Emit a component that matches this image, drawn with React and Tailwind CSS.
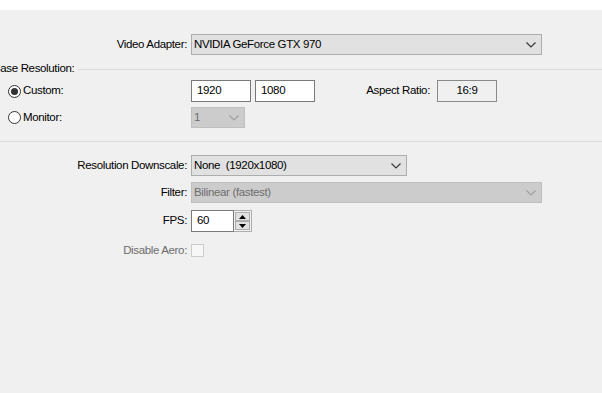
import React from "react";

const font = {
  fontFamily: '"Liberation Sans", Arial, sans-serif',
  letterSpacing: "-0.35px",
};

function Chevron({ disabled }) {
  return (
    <svg width="10" height="6" viewBox="0 0 10 6" className="shrink-0">
      <polyline
        points="0.5,0.5 5,5 9.5,0.5"
        fill="none"
        stroke={disabled ? "#a0a0a0" : "#333333"}
        strokeWidth="1.1"
      />
    </svg>
  );
}

function Combo({ width, value, disabled }) {
  return (
    <div
      className={
        "flex h-[21px] items-center justify-between border pl-[2px] pr-[5px] " +
        (disabled
          ? "border-[#bfbfbf] bg-[#cccccc] text-[#6d6d6d]"
          : "border-[#adadad] bg-[#e1e1e1] text-black")
      }
      style={{ width }}
    >
      <span className="whitespace-pre">{value}</span>
      <Chevron disabled={disabled} />
    </div>
  );
}

function Label({ children, muted }) {
  return (
    <div
      className={
        "w-[191px] shrink-0 pr-[4px] text-right " +
        (muted ? "text-[#6d6d6d]" : "text-black")
      }
    >
      {children}
    </div>
  );
}

function Radio({ checked, label }) {
  return (
    <div className="flex w-[191px] shrink-0 items-center pl-[8px]">
      <span className="flex h-[13px] w-[13px] items-center justify-center rounded-full border border-[#333333] bg-white">
        {checked && <span className="h-[7px] w-[7px] rounded-full bg-[#333333]" />}
      </span>
      <span className="ml-[2px] text-black">{label}</span>
    </div>
  );
}

function TextBox({ width, value }) {
  return (
    <div
      className="flex h-[22px] items-center border border-[#7a7a7a] bg-white pl-[5px]"
      style={{ width }}
    >
      {value}
    </div>
  );
}

export default function App() {
  return (
    <div className="h-[393px] w-[602px] overflow-hidden bg-white text-[11.5px]" style={font}>
      <div className="h-[10px] bg-white" />
      <div className="flex h-[383px] flex-col bg-[#f0f0f0]">
        {/* Video adapter */}
        <div className="mt-[24px] flex items-center">
          <Label>Video Adapter:</Label>
          <Combo width={351} value="NVIDIA GeForce GTX 970" />
        </div>

        {/* Base resolution group */}
        <div className="mt-[7px] flex h-[14px] items-center">
          <span className="ml-[-7px] whitespace-nowrap text-black">Base Resolution:</span>
          <div className="ml-[4px] h-px flex-1 bg-[#dcdcdc]" />
        </div>

        <div className="mt-[4px] flex h-[22px] items-center">
          <Radio checked label="Custom:" />
          <TextBox width={60} value="1920" />
          <div className="ml-[4px]">
            <TextBox width={60} value="1080" />
          </div>
          <div className="ml-[45px] w-[70px] text-right">Aspect Ratio:</div>
          <div className="ml-[7px] flex h-[22px] w-[60px] items-center justify-center border border-[#8a8a8a]">
            16:9
          </div>
        </div>

        <div className="mt-[5px] flex h-[21px] items-center">
          <Radio label="Monitor:" />
          <Combo width={54} value="1" disabled />
        </div>

        <div className="mt-[13px] h-px bg-[#dcdcdc]" />

        {/* Downscale settings */}
        <div className="mt-[13px] flex items-center">
          <Label>Resolution Downscale:</Label>
          <Combo width={216} value="None  (1920x1080)" />
        </div>

        <div className="mt-[6px] flex items-center">
          <Label>Filter:</Label>
          <Combo width={351} value="Bilinear (fastest)" disabled />
        </div>

        <div className="mt-[7px] flex items-center">
          <Label>FPS:</Label>
          <div className="flex h-[22px] w-[43px] items-center border border-[#7a7a7a] bg-white pl-[5px]">
            60
          </div>
          <div className="flex h-[22px] w-[18px] flex-col justify-between border border-l-0 border-[#adadad] bg-[#f0f0f0] p-px">
            <div className="flex h-[9px] items-center justify-center border border-[#adadad] bg-[#e1e1e1]">
              <svg width="7" height="4" viewBox="0 0 7 4">
                <polygon points="0,4 7,4 3.5,0" fill="#000" />
              </svg>
            </div>
            <div className="flex h-[9px] items-center justify-center border border-[#adadad] bg-[#e1e1e1]">
              <svg width="7" height="4" viewBox="0 0 7 4">
                <polygon points="0,0 7,0 3.5,4" fill="#000" />
              </svg>
            </div>
          </div>
        </div>

        <div className="mt-[10px] flex items-center">
          <Label muted>Disable Aero:</Label>
          <div className="h-[13px] w-[13px] border border-[#cccccc] bg-[#f7f7f7]" />
        </div>
      </div>
    </div>
  );
}
